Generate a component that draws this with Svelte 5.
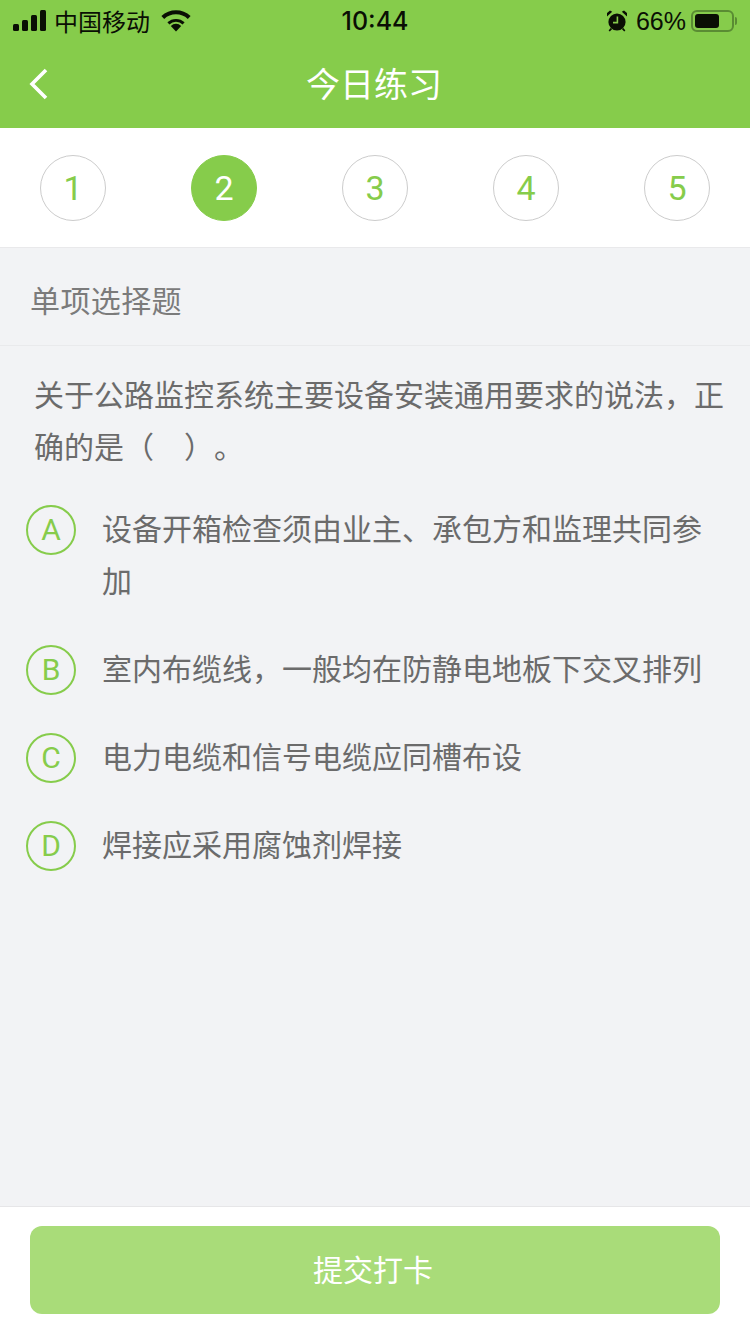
<script>
	const steps = [1, 2, 3, 4, 5];
	const current = 2;
	const options = [
		{ key: 'A', text: '设备开箱检查须由业主、承包方和监理共同参加' },
		{ key: 'B', text: '室内布缆线，一般均在防静电地板下交叉排列' },
		{ key: 'C', text: '电力电缆和信号电缆应同槽布设' },
		{ key: 'D', text: '焊接应采用腐蚀剂焊接' }
	];
</script>

<div class="page">
	<header class="top">
		<div class="status">
			<div class="status-left">
				<svg class="signal" width="34" height="22" viewBox="0 0 34 22">
					<rect x="0" y="14" width="6" height="7" rx="1.5" />
					<rect x="9" y="10" width="6" height="11" rx="1.5" />
					<rect x="18" y="5" width="6" height="16" rx="1.5" />
					<rect x="27" y="0" width="6" height="21" rx="1.5" />
				</svg>
				<span class="carrier">中国移动</span>
				<svg class="wifi" width="30" height="22" viewBox="0 0 30 22">
					<path d="M15 21.5 9.8 15.9a7.6 7.6 0 0 1 10.4 0z" />
					<path d="M6.4 12.3a12.6 12.6 0 0 1 17.2 0l-2 2.2a9.4 9.4 0 0 0-13.2 0z" />
					<path d="M3.2 8.9a17.4 17.4 0 0 1 23.6 0L29.6 6a21.4 21.4 0 0 0-29.2 0z" />
				</svg>
			</div>
			<div class="time">10:44</div>
			<div class="status-right">
				<svg class="alarm" width="22" height="22" viewBox="0 0 22 22">
					<circle cx="11" cy="12" r="8.6" />
					<path d="M1 6.4 6.2 1.8 4 .6 1 3zM21 6.4l-5.2-4.6 2.2-1.2L21 3zM4.6 18l-2 2.6 1.2.8 2.4-2.4zM17.4 18l2 2.6-1.2.8-2.4-2.4z" />
					<path class="hands" d="M11.4 6.6v6H7" />
				</svg>
				<span class="percent">66%</span>
				<div class="battery"><div class="battery-level"></div></div>
				<div class="battery-nub"></div>
			</div>
		</div>
		<div class="nav">
			<svg class="back" width="20" height="32" viewBox="0 0 20 32">
				<path d="M17 2 3 16l14 14" />
			</svg>
			<h1>今日练习</h1>
		</div>
	</header>

	<nav class="steps">
		{#each steps as step}
			<div class={['step', { active: step === current }]}>{step}</div>
		{/each}
	</nav>

	<main class="body">
		<div class="type">单项选择题</div>
		<p class="question">关于公路监控系统主要设备安装通用要求的说法，正确的是（　）。</p>
		<ul class="options">
			{#each options as option}
				<li class="option">
					<span class="letter">{option.key}</span>
					<span class="option-text">{option.text}</span>
				</li>
			{/each}
		</ul>
	</main>

	<footer class="bottom">
		<button class="submit" type="button">提交打卡</button>
	</footer>
</div>

<style>
	:global(body) {
		margin: 0;
	}

	.page {
		height: 1334px;
		display: flex;
		flex-direction: column;
		background: #f2f3f5;
		font-family: 'Noto Sans CJK SC', 'Noto Sans', sans-serif;
		text-spacing-trim: space-all;
	}

	/* Header */
	.top {
		height: 128px;
		background: #86cc4b;
		flex: none;
	}

	.status {
		height: 40px;
		display: grid;
		grid-template-columns: 1fr auto 1fr;
		align-items: center;
		padding: 1px 13px 0;
		box-sizing: border-box;
		color: #0a0f04;
	}

	.status-left {
		display: flex;
		align-items: center;
	}

	.signal {
		fill: #0a0f04;
		margin-right: 8px;
	}

	.carrier {
		font-size: 24px;
		line-height: 40px;
		margin-left: -1px;
	}

	.wifi {
		fill: #0a0f04;
		margin-left: 11px;
	}

	.time {
		font-family: Inter, 'Liberation Sans', sans-serif;
		font-size: 25px;
		font-weight: 500;
		line-height: 40px;
	}

	.status-right {
		display: flex;
		align-items: center;
		justify-content: flex-end;
	}

	.alarm {
		fill: #0a0f04;
		margin-right: 8px;
	}

	.hands {
		fill: none;
		stroke: #86cc4b;
		stroke-width: 1.6;
	}

	.percent {
		font-family: 'Liberation Sans', Inter, sans-serif;
		font-size: 25px;
		line-height: 40px;
		margin-right: 5px;
	}

	.battery {
		width: 43px;
		height: 22px;
		box-sizing: border-box;
		border: 2px solid #5a8c33;
		border-radius: 6px;
		padding: 2px;
	}

	.battery-level {
		width: 24px;
		height: 14px;
		background: #0a0f04;
		border-radius: 3px;
	}

	.battery-nub {
		width: 2px;
		height: 8px;
		margin-left: 1px;
		background: #5a8c33;
		border-radius: 0 2px 2px 0;
	}

	.nav {
		height: 88px;
		display: flex;
		align-items: center;
		justify-content: center;
		position: relative;
	}

	.back {
		position: absolute;
		left: 29px;
		top: 28px;
		fill: none;
		stroke: #fff;
		stroke-width: 3.6;
	}

	h1 {
		margin: 0 2px 0 0;
		font-size: 34px;
		font-weight: 400;
		line-height: 48px;
		color: #fff;
		padding-bottom: 3px;
	}

	/* Step strip */
	.steps {
		flex: none;
		height: 119px;
		box-sizing: content-box;
		border-bottom: 1px solid #e9e9eb;
		background: #fff;
		display: flex;
		justify-content: space-between;
		align-items: flex-start;
		padding: 0 40px;
	}

	.step {
		width: 66px;
		height: 66px;
		margin-top: 27px;
		box-sizing: border-box;
		border: 1px solid #cccccc;
		border-radius: 50%;
		display: flex;
		align-items: center;
		justify-content: center;
		font-family: Roboto, sans-serif;
		font-size: 34px;
		font-weight: 400;
		color: #86cc4b;
	}

	.step.active {
		background: #86cc4b;
		border-color: #86cc4b;
		color: #fff;
	}

	/* Question */
	.body {
		flex: 1;
		min-height: 0;
	}

	.type {
		height: 98px;
		box-sizing: border-box;
		border-bottom: 1px solid #e9eaec;
		padding-left: 30px;
		line-height: 102px;
		font-size: 30px;
		letter-spacing: 0.4px;
		color: #7b7b7b;
		overflow: hidden;
	}

	.question {
		margin: 0;
		padding: 21px 25px 0 34px;
		font-size: 30px;
		line-height: 52px;
		color: #6b6b6b;
	}

	.options {
		list-style: none;
		margin: 0;
		padding: 30px 0 0 26px;
	}

	.option {
		display: flex;
		align-items: flex-start;
		margin-bottom: 36px;
		color: #6b6b6b;
		font-size: 30px;
		line-height: 52px;
	}

	.letter {
		flex: none;
		width: 50px;
		height: 50px;
		box-sizing: border-box;
		border: 2px solid #86cc4b;
		border-radius: 50%;
		margin: 4px 0 -2px;
		display: flex;
		align-items: center;
		justify-content: center;
		font-family: Roboto, sans-serif;
		font-size: 30px;
		font-weight: 400;
		color: #86cc4b;
	}

	.option-text {
		margin-left: 26px;
		width: 611px;
	}

	/* Footer */
	.bottom {
		flex: none;
		height: 128px;
		box-sizing: border-box;
		border-top: 1px solid #e6e6e8;
		background: #fff;
		padding: 19px 30px 0;
	}

	.submit {
		display: block;
		width: 100%;
		height: 88px;
		border: 0;
		border-radius: 12px;
		background: #a9dc79;
		color: #fff;
		font-family: inherit;
		font-size: 30px;
		padding: 0 4px 4px 0;
	}
</style>
